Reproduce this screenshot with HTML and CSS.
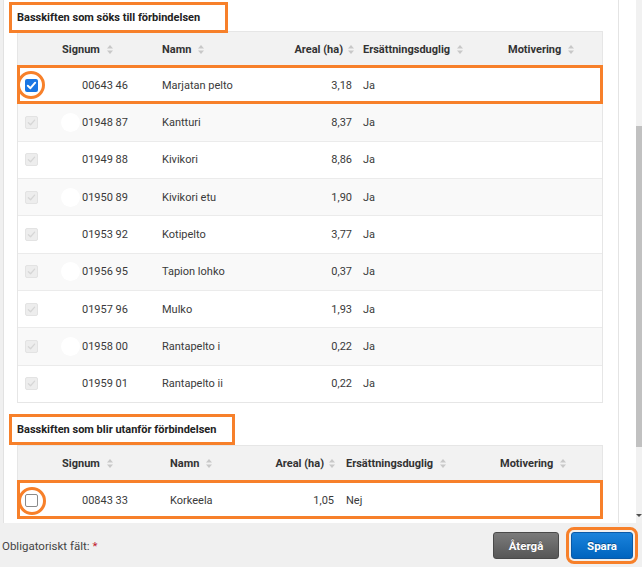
FILE: index.html
```html
<!DOCTYPE html>
<html lang="sv">
<head>
<meta charset="utf-8">
<title>Basskiften</title>
<link rel="stylesheet" href="styles.css">
</head>
<body>
<div class="app">
  <div class="scroller">
    <div class="edge"></div>
    <div class="panel">
      <div class="title t1">Basskiften som söks till förbindelsen</div>
      <div class="tbl tbl1">
        <div class="row head">
          <div class="c c1"></div>
          <div class="c c2"><span>Signum</span><svg class="sort" viewBox="0 0 6 9"><path d="M0 3.6 3 0 6 3.6Z M0 5.4 3 9 6 5.4Z"/></svg></div>
          <div class="c c3"><span>Namn</span><svg class="sort" viewBox="0 0 6 9"><path d="M0 3.6 3 0 6 3.6Z M0 5.4 3 9 6 5.4Z"/></svg></div>
          <div class="c c4"><span>Areal (ha)</span><svg class="sort" viewBox="0 0 6 9"><path d="M0 3.6 3 0 6 3.6Z M0 5.4 3 9 6 5.4Z"/></svg></div>
          <div class="c c5"><span>Ersättningsduglig</span><svg class="sort" viewBox="0 0 6 9"><path d="M0 3.6 3 0 6 3.6Z M0 5.4 3 9 6 5.4Z"/></svg></div>
          <div class="c c6"><span>Motivering</span><svg class="sort" viewBox="0 0 6 9"><path d="M0 3.6 3 0 6 3.6Z M0 5.4 3 9 6 5.4Z"/></svg></div>
        </div>
        <div class="row sel">
          <div class="c c1"><span class="cb on ring"><svg viewBox="0 0 12 12"><path d="M2.6 6.2 5 8.5 9.4 3.4" /></svg></span></div>
          <div class="c c2"><span class="num">00643 46</span></div>
          <div class="c c3">Marjatan pelto</div>
          <div class="c c4">3,18</div>
          <div class="c c5">Ja</div>
          <div class="c c6"></div>
        </div>
        <div class="row alt">
          <div class="c c1"><span class="cb dis"><svg viewBox="0 0 12 12"><path d="M2.6 6.2 5 8.5 9.4 3.4" /></svg></span></div>
          <div class="c c2"><span class="blob"></span><span class="num">01948 87</span></div>
          <div class="c c3">Kantturi</div>
          <div class="c c4">8,37</div>
          <div class="c c5">Ja</div>
          <div class="c c6"></div>
        </div>
        <div class="row">
          <div class="c c1"><span class="cb dis"><svg viewBox="0 0 12 12"><path d="M2.6 6.2 5 8.5 9.4 3.4" /></svg></span></div>
          <div class="c c2"><span class="num">01949 88</span></div>
          <div class="c c3">Kivikori</div>
          <div class="c c4">8,86</div>
          <div class="c c5">Ja</div>
          <div class="c c6"></div>
        </div>
        <div class="row alt">
          <div class="c c1"><span class="cb dis"><svg viewBox="0 0 12 12"><path d="M2.6 6.2 5 8.5 9.4 3.4" /></svg></span></div>
          <div class="c c2"><span class="blob"></span><span class="num">01950 89</span></div>
          <div class="c c3">Kivikori etu</div>
          <div class="c c4">1,90</div>
          <div class="c c5">Ja</div>
          <div class="c c6"></div>
        </div>
        <div class="row">
          <div class="c c1"><span class="cb dis"><svg viewBox="0 0 12 12"><path d="M2.6 6.2 5 8.5 9.4 3.4" /></svg></span></div>
          <div class="c c2"><span class="num">01953 92</span></div>
          <div class="c c3">Kotipelto</div>
          <div class="c c4">3,77</div>
          <div class="c c5">Ja</div>
          <div class="c c6"></div>
        </div>
        <div class="row alt">
          <div class="c c1"><span class="cb dis"><svg viewBox="0 0 12 12"><path d="M2.6 6.2 5 8.5 9.4 3.4" /></svg></span></div>
          <div class="c c2"><span class="blob"></span><span class="num">01956 95</span></div>
          <div class="c c3">Tapion lohko</div>
          <div class="c c4">0,37</div>
          <div class="c c5">Ja</div>
          <div class="c c6"></div>
        </div>
        <div class="row">
          <div class="c c1"><span class="cb dis"><svg viewBox="0 0 12 12"><path d="M2.6 6.2 5 8.5 9.4 3.4" /></svg></span></div>
          <div class="c c2"><span class="num">01957 96</span></div>
          <div class="c c3">Mulko</div>
          <div class="c c4">1,93</div>
          <div class="c c5">Ja</div>
          <div class="c c6"></div>
        </div>
        <div class="row alt">
          <div class="c c1"><span class="cb dis"><svg viewBox="0 0 12 12"><path d="M2.6 6.2 5 8.5 9.4 3.4" /></svg></span></div>
          <div class="c c2"><span class="blob"></span><span class="num">01958 00</span></div>
          <div class="c c3">Rantapelto i</div>
          <div class="c c4">0,22</div>
          <div class="c c5">Ja</div>
          <div class="c c6"></div>
        </div>
        <div class="row">
          <div class="c c1"><span class="cb dis"><svg viewBox="0 0 12 12"><path d="M2.6 6.2 5 8.5 9.4 3.4" /></svg></span></div>
          <div class="c c2"><span class="num">01959 01</span></div>
          <div class="c c3">Rantapelto ii</div>
          <div class="c c4">0,22</div>
          <div class="c c5">Ja</div>
          <div class="c c6"></div>
        </div>
      </div>

      <div class="title t2">Basskiften som blir utanför förbindelsen</div>
      <div class="tbl tbl2">
        <div class="row head">
          <div class="c c1"></div>
          <div class="c c2"><span>Signum</span><svg class="sort" viewBox="0 0 6 9"><path d="M0 3.6 3 0 6 3.6Z M0 5.4 3 9 6 5.4Z"/></svg></div>
          <div class="c c3"><span>Namn</span><svg class="sort" viewBox="0 0 6 9"><path d="M0 3.6 3 0 6 3.6Z M0 5.4 3 9 6 5.4Z"/></svg></div>
          <div class="c c4"><span>Areal (ha)</span><svg class="sort" viewBox="0 0 6 9"><path d="M0 3.6 3 0 6 3.6Z M0 5.4 3 9 6 5.4Z"/></svg></div>
          <div class="c c5"><span>Ersättningsduglig</span><svg class="sort" viewBox="0 0 6 9"><path d="M0 3.6 3 0 6 3.6Z M0 5.4 3 9 6 5.4Z"/></svg></div>
          <div class="c c6"><span>Motivering</span><svg class="sort" viewBox="0 0 6 9"><path d="M0 3.6 3 0 6 3.6Z M0 5.4 3 9 6 5.4Z"/></svg></div>
        </div>
        <div class="row sel">
          <div class="c c1"><span class="cb off ring"></span></div>
          <div class="c c2"><span class="num">00843 33</span></div>
          <div class="c c3">Korkeela</div>
          <div class="c c4">1,05</div>
          <div class="c c5">Nej</div>
          <div class="c c6"></div>
        </div>
      </div>
    </div>
    <div class="gutter"></div>
    <div class="scrollbar">
      <div class="track-top"></div>
      <div class="thumb"></div>
      <div class="track-bottom"><span class="arrow"></span></div>
    </div>
  </div>
  <div class="footer">
    <div class="req">Obligatoriskt fält: <span class="star">*</span></div>
    <div class="actions">
      <button class="btn back">Återgå</button>
      <button class="btn save">Spara</button>
    </div>
  </div>
</div>
</body>
</html>
```

FILE: styles.css
```css
* { box-sizing: border-box; }
html, body { margin: 0; padding: 0; }
body {
  width: 642px;
  height: 567px;
  overflow: hidden;
  font-family: Roboto, "Liberation Sans", sans-serif;
  font-size: 11px;
  color: #3a3a3a;
  background: #fff;
}
.app { display: flex; flex-direction: column; height: 567px; }
.scroller { display: flex; height: 523px; overflow: hidden; }
.edge { width: 4px; background: #f0f0f0; border-right: 1px solid #e2e2e2; flex: none; }
.panel {
  width: 615px;
  flex: none;
  background: #fff;
  border-right: 1px solid #e4e4e4;
  padding-top: 5px;
}
.gutter { flex: 1; background: #fff; }
.scrollbar { width: 6px; flex: none; display: flex; flex-direction: column; background: #f1f1f1; }
.track-top { height: 126px; }
.thumb { height: 321px; background: #c1c1c1; }
.track-bottom { flex: 1; position: relative; }
.arrow {
  position: absolute; left: 0; bottom: 6px;
  border-left: 3px solid transparent; border-right: 3px solid transparent;
  border-top: 3px solid #505050;
}

.title {
  position: relative;
  z-index: 2;
  margin-left: 8px;
  height: 25px;
  display: flex;
  align-items: center;
  padding-left: 5px;
  font-weight: 700;
  font-size: 11px;
  white-space: nowrap;
  color: #222;
  outline: 3px solid #f7802a;
}
.t1 { width: 213px; margin-bottom: 1px; }
.t2 { width: 220px; margin-top: 14px; margin-bottom: 3px; }

.tbl { margin-left: 13px; width: 586px; border: 1px solid #e6e6e6; border-top: 0; }
.tbl1 .row { grid-template-columns: 30px 98px 116px 96px 134px 1fr; }
.tbl2 .row { grid-template-columns: 30px 98px 104px 90px 144px 1fr; }
.row { display: grid; height: 37.33px; border-top: 1px solid #ebebeb; background: #fff; align-items: center; }
.row.alt { background: #f9f9f9; }
.row.head { height: 35px; background: #f2f2f2; border-top: 1px solid #e6e6e6; font-weight: 700; color: #333; }
.tbl2 .row.head { height: 36px; }
.row.sel { position: relative; z-index: 1; outline: 3px solid #f7802a; outline-offset: -2px; }
.c { display: flex; align-items: center; height: 100%; white-space: nowrap; }
.c1 { padding-left: 7px; }
.c2 { padding-left: 13px; padding-right: 18px; }
.c2 .num { margin-left: auto; }
.head .c2 { padding-left: 14px; }
.tbl1 .c3 { padding-left: 16px; }
.tbl2 .c3 { padding-left: 24px; }
.c4 { justify-content: flex-end; padding-right: 6px; }
.tbl1 .head .c4 { padding-right: 4px; }
.tbl2 .head .c4 { padding-right: 5px; }
.tbl1 .c5 { padding-left: 5px; }
.tbl2 .c5 { padding-left: 6px; }
.tbl1 .c6 { padding-left: 16px; }
.tbl2 .c6 { padding-left: 16px; }
.sort { width: 6px; height: 9px; margin-left: 7px; fill: #c8c8c8; flex: none; }
.head .c4 .sort { margin-left: 5px; }

.blob { width: 19px; height: 19px; border-radius: 50%; background: #fff; flex: none; }

.cb {
  position: relative;
  width: 13px; height: 13px;
  border-radius: 2px;
  display: inline-block;
  flex: none;
}
.cb svg { display: block; width: 13px; height: 13px; fill: none; stroke-width: 1.8; stroke-linecap: round; stroke-linejoin: round; }
.cb.on { background: #1a76e3; border: 0; }
.cb.on svg { stroke: #fff; }
.cb.dis { background: #ededed; border: 1px solid #e3e3e3; }
.cb.dis svg { width: 11px; height: 11px; stroke: #d6d6d6; stroke-width: 1.4; }
.cb.off { background: #fff; border: 1px solid #8a8a8a; }
.cb.ring::after {
  content: "";
  position: absolute;
  left: -8px; top: -8px;
  width: 28px; height: 28px;
  border: 3px solid #f7802a;
  border-radius: 50%;
  box-sizing: border-box;
}

.footer {
  height: 44px;
  background: #f0f0f0;
  display: flex;
  align-items: center;
  justify-content: space-between;
  padding-left: 2px;
  padding-right: 9px;
}
.req { color: #444; font-size: 11.5px; padding-top: 1px; }
.star { color: #c0182a; }
.actions { display: flex; gap: 12px; align-items: center; padding-top: 1px; }
.btn {
  font-family: Roboto, "Liberation Sans", sans-serif;
  font-weight: 700;
  font-size: 11.5px;
  color: #fff;
  height: 27px;
  border-radius: 3px;
  text-shadow: 0 -1px 0 rgba(0,0,0,0.35);
  cursor: pointer;
}
.back {
  width: 66px;
  background: linear-gradient(#7b7b7b, #575757);
  border: 1px solid #4a4a4a;
}
.save {
  width: 62px;
  background: linear-gradient(#1a83dc, #0064bf);
  border: 1px solid #0a59a6;
  outline: 3px solid #f7802a;
  outline-offset: 2px;
}
```
